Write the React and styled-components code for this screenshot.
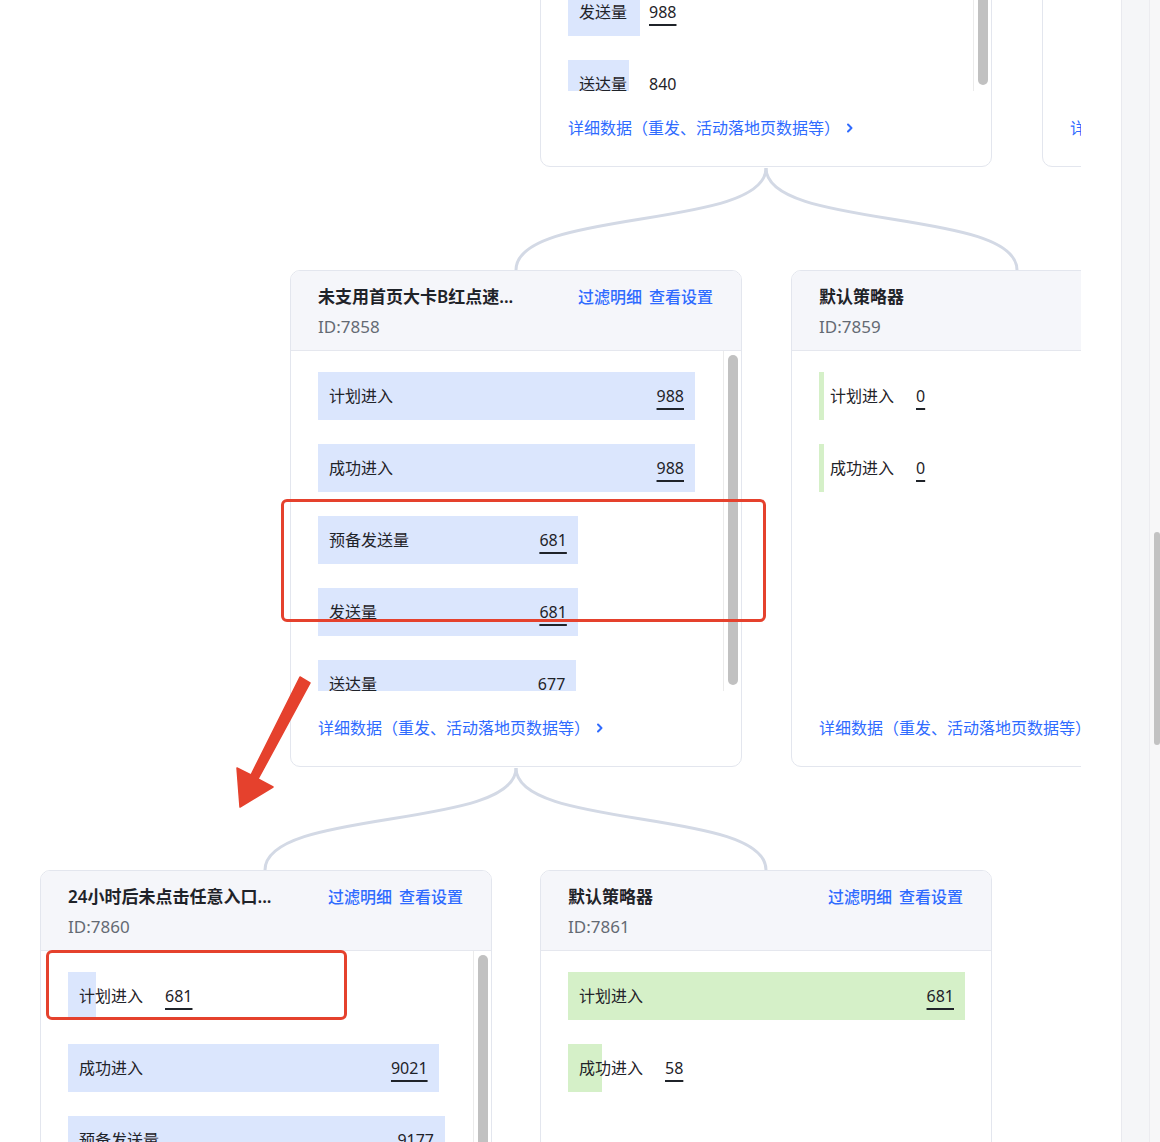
import React from 'react';
import styled, { createGlobalStyle } from 'styled-components';

const GlobalStyle = createGlobalStyle`
  html, body {
    margin: 0;
    padding: 0;
    background: #fff;
  }
  body {
    font-family: "Noto Sans", "Noto Sans CJK SC", sans-serif;
    color: #1f2329;
  }
  * {
    box-sizing: border-box;
  }
`;

const Page = styled.div`
  display: flex;
  width: 1160px;
  height: 1142px;
  overflow: hidden;
  background: #fff;
`;

const Main = styled.main`
  flex: none;
  width: 1121px;
  height: 100%;
  padding-right: 40px;
`;

const Canvas = styled.div`
  position: relative;
  width: 1081px;
  height: 100%;
  overflow: hidden;
`;

const SidePanel = styled.aside`
  flex: none;
  width: 29px;
  background: #f5f6f8;
  border-left: 1px solid #e9eaef;
  border-right: 1px solid #ececf0;
`;

const PageScroll = styled.div`
  position: relative;
  flex: none;
  width: 10px;
  background: #f7f7f8;
`;

const PageThumb = styled.div`
  position: absolute;
  top: 532px;
  right: 0;
  width: 6px;
  height: 213px;
  border-radius: 3px;
  background: #c2c2c2;
`;

const Links = styled.svg`
  position: absolute;
  left: 0;
  top: 0;
`;

const Node = styled.section`
  position: absolute;
  left: ${(p) => p.$x}px;
  top: ${(p) => p.$y}px;
  width: 452px;
  height: 497px;
  display: flex;
  flex-direction: column;
  background: #fff;
  border: 1px solid #e3e6ee;
  border-radius: 10px;
  overflow: hidden;
`;

const Header = styled.header`
  flex: none;
  height: 80px;
  padding: 14px 28px 0 27px;
  background: #f5f6fa;
  border-bottom: 1px solid #e5e7ee;
`;

const TitleLine = styled.div`
  display: flex;
  align-items: center;
  justify-content: space-between;
  gap: 16px;
  height: 24px;
`;

const Title = styled.h3`
  margin: 0;
  min-width: 0;
  font-size: 17px;
  font-weight: 600;
  line-height: 24px;
  color: #1f2329;
  white-space: nowrap;
  overflow: hidden;
  text-overflow: ellipsis;
`;

const Actions = styled.div`
  flex: none;
  display: flex;
  gap: 7px;
`;

const ActionLink = styled.a`
  font-size: 16px;
  font-weight: 500;
  line-height: 24px;
  color: #2f6bff;
  cursor: pointer;
  white-space: nowrap;
`;

const NodeId = styled.div`
  margin-top: 6px;
  font-size: 17px;
  line-height: 24px;
  color: #646a73;
`;

const Body = styled.div`
  flex: none;
  display: flex;
  height: 340px;
  overflow: hidden;
`;

const RowList = styled.div`
  flex: 1;
  min-width: 0;
  display: flex;
  flex-direction: column;
  gap: 24px;
  padding: 21px ${(p) => (p.$scroll ? 28 : 26)}px 0 27px;
  overflow: hidden;
`;

const ScrollRail = styled.div`
  flex: none;
  width: 18px;
  padding: 4px 3px 6px 4px;
  border-left: 1px solid #ebebeb;
  background: #fff;
`;

const ScrollThumb = styled.div`
  height: 100%;
  border-radius: 5px;
  background: #c1c1c1;
`;

const Row = styled.div`
  position: relative;
  flex: none;
  display: flex;
  align-items: center;
  height: 48px;
`;

const Bar = styled.div`
  position: absolute;
  left: 0;
  top: 0;
  bottom: 0;
  background: ${(p) => (p.$tone === 'green' ? '#d5f0c8' : '#dbe6fd')};
`;

const RowContent = styled.div`
  position: relative;
  display: flex;
  align-items: center;
  padding: 0 11px;
`;

const Label = styled.span`
  margin-right: 22px;
  font-size: 16px;
  line-height: 22px;
  color: #1f2329;
  white-space: nowrap;
`;

const Value = styled.span`
  margin-left: auto;
  font-size: 16px;
  line-height: 22px;
  color: #1f2329;
  text-decoration: underline;
  text-decoration-thickness: 2px;
  text-underline-offset: 6px;
`;

const Footer = styled.footer`
  flex: 1;
  padding: 25px 27px 0 27px;
`;

const DetailLink = styled.a`
  display: inline-flex;
  align-items: center;
  gap: 6px;
  font-size: 16px;
  line-height: 24px;
  color: #2f6bff;
  white-space: nowrap;
  cursor: pointer;
`;

const Highlight = styled.div`
  position: absolute;
  left: ${(p) => p.$x}px;
  top: ${(p) => p.$y}px;
  width: ${(p) => p.$w}px;
  height: ${(p) => p.$h}px;
  border: 3px solid #e5412d;
  border-radius: 6px;
  pointer-events: none;
`;

const Arrow = styled.svg`
  position: absolute;
  left: 0;
  top: 0;
  pointer-events: none;
`;

const nodes = [
  {
    id: 7857,
    title: '首页大卡A红点速推...',
    x: 540,
    y: -330,
    tone: 'blue',
    max: 5200,
    actions: true,
    scroll: true,
    rows: [
      ['计划进入', 5200],
      ['成功进入', 5200],
      ['预备发送量', 1012],
      ['发送量', 988],
      ['送达量', 840],
    ],
  },
  {
    id: 7856,
    title: '默认策略器',
    x: 1042,
    y: -330,
    tone: 'green',
    max: 0,
    actions: true,
    rows: [
      ['计划进入', 0],
      ['成功进入', 0],
    ],
  },
  {
    id: 7858,
    title: '未支用首页大卡B红点速...',
    x: 290,
    y: 270,
    tone: 'blue',
    max: 988,
    actions: true,
    scroll: true,
    rows: [
      ['计划进入', 988],
      ['成功进入', 988],
      ['预备发送量', 681],
      ['发送量', 681],
      ['送达量', 677],
    ],
  },
  {
    id: 7859,
    title: '默认策略器',
    x: 791,
    y: 270,
    tone: 'green',
    max: 0,
    actions: false,
    rows: [
      ['计划进入', 0],
      ['成功进入', 0],
    ],
  },
  {
    id: 7860,
    title: '24小时后未点击任意入口...',
    x: 40,
    y: 870,
    tone: 'blue',
    max: 9177,
    actions: true,
    scroll: true,
    rows: [
      ['计划进入', 681],
      ['成功进入', 9021],
      ['预备发送量', 9177],
      ['发送量', 9177],
      ['送达量', 9104],
    ],
  },
  {
    id: 7861,
    title: '默认策略器',
    x: 540,
    y: 870,
    tone: 'green',
    max: 681,
    actions: true,
    rows: [
      ['计划进入', 681],
      ['成功进入', 58],
    ],
  },
];

const edges = [
  [766, 168, 516, 270],
  [766, 168, 1017, 270],
  [516, 768, 265, 870],
  [516, 768, 766, 870],
];

function Chevron() {
  return (
    <svg width="8" height="10" viewBox="0 0 8 10">
      <path
        d="M2 1.5 L5.5 5 L2 8.5"
        fill="none"
        stroke="#2f6bff"
        strokeWidth="2"
        strokeLinecap="round"
        strokeLinejoin="round"
      />
    </svg>
  );
}

function MetricRow({ label, value, max, tone }) {
  const pct = max > 0 ? (value / max) * 100 : 0;
  return (
    <Row>
      <Bar $tone={tone} style={{ width: `max(5px, ${pct}%)` }} />
      <RowContent style={{ minWidth: `${pct}%` }}>
        <Label>{label}</Label>
        <Value>{value}</Value>
      </RowContent>
    </Row>
  );
}

function StrategyNode({ node }) {
  return (
    <Node $x={node.x} $y={node.y}>
      <Header>
        <TitleLine>
          <Title>{node.title}</Title>
          {node.actions && (
            <Actions>
              <ActionLink>过滤明细</ActionLink>
              <ActionLink>查看设置</ActionLink>
            </Actions>
          )}
        </TitleLine>
        <NodeId>ID:{node.id}</NodeId>
      </Header>
      <Body>
        <RowList $scroll={node.scroll}>
          {node.rows.map(([label, value]) => (
            <MetricRow
              key={label}
              label={label}
              value={value}
              max={node.max}
              tone={node.tone}
            />
          ))}
        </RowList>
        {node.scroll && (
          <ScrollRail>
            <ScrollThumb />
          </ScrollRail>
        )}
      </Body>
      <Footer>
        <DetailLink>
          详细数据（重发、活动落地页数据等）
          <Chevron />
        </DetailLink>
      </Footer>
    </Node>
  );
}

export default function App() {
  return (
    <>
      <GlobalStyle />
      <Page>
        <Main>
          <Canvas>
            <Links width="1081" height="1142">
              {edges.map(([x1, y1, x2, y2]) => (
                <path
                  key={`${x1}-${x2}-${y2}`}
                  d={`M${x1} ${y1} C${x1} ${y1 + 62} ${x2} ${y2 - 62} ${x2} ${y2}`}
                  fill="none"
                  stroke="#d3d9e5"
                  strokeWidth="3"
                />
              ))}
            </Links>
            {nodes.map((node) => (
              <StrategyNode key={node.id} node={node} />
            ))}
            <Highlight $x={281} $y={499} $w={485} $h={123} />
            <Highlight $x={46} $y={950} $w={301} $h={70} />
            <Arrow width="1081" height="1142">
              <polygon
                points="300,677 310,683 258,779 273,787 240,807 237,768 251,775"
                fill="#e5412d"
                stroke="#e5412d"
                strokeWidth="1.5"
                strokeLinejoin="round"
              />
            </Arrow>
          </Canvas>
        </Main>
        <SidePanel />
        <PageScroll>
          <PageThumb />
        </PageScroll>
      </Page>
    </>
  );
}
